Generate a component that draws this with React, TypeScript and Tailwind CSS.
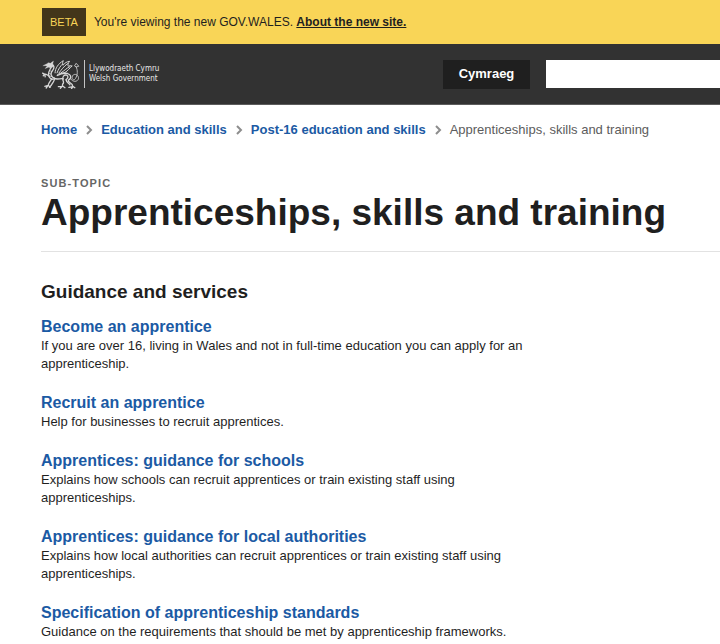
import React from "react";

const crumbs = ["Home", "Education and skills", "Post-16 education and skills"];

const services = [
  {
    title: "Become an apprentice",
    text: "If you are over 16, living in Wales and not in full-time education you can apply for an apprenticeship.",
  },
  {
    title: "Recruit an apprentice",
    text: "Help for businesses to recruit apprentices.",
  },
  {
    title: "Apprentices: guidance for schools",
    text: "Explains how schools can recruit apprentices or train existing staff using apprenticeships.",
  },
  {
    title: "Apprentices: guidance for local authorities",
    text: "Explains how local authorities can recruit apprentices or train existing staff using apprenticeships.",
  },
  {
    title: "Specification of apprenticeship standards",
    text: "Guidance on the requirements that should be met by apprenticeship frameworks.",
  },
];

function Dragon() {
  return (
    <svg
      viewBox="5 11 114 88"
      className="h-[29px] w-[38px]"
      fill="none"
      stroke="#d6d6d6"
      strokeWidth="4"
      strokeLinecap="round"
      strokeLinejoin="round"
      aria-hidden="true"
    >
      {/* head, jaw and ear */}
      <path d="M8 28 L18 23 L24 19 L30 21 L39 14 L37 23 L40 29 L33 35 L24 33 L14 37 L20 29 Z" fill="#d6d6d6" strokeWidth="1" />
      {/* neck and chest */}
      <path d="M38 27 C46 35 36 41 33 48 C29 57 34 64 42 66" />
      <path d="M31 35 C28 41 24 47 24 54 C24 63 30 68 38 70" />
      <path d="M29 44 L35 46 M26 52 L33 54 M29 61 L36 60" strokeWidth="2" />
      {/* raised wing */}
      <path d="M44 50 C44 36 54 22 69 13 C66 20 66 24 68 27 C73 20 80 16 88 15 C83 21 82 26 84 30 C88 28 92 28 96 29 C87 36 84 43 74 49 C64 52 56 50 50 57" strokeWidth="3" />
      <path d="M50 50 C54 39 60 29 67 23 M56 50 C63 41 70 31 82 22 M62 50 C72 44 78 36 89 31" strokeWidth="3" />
      {/* belly, back and haunch */}
      <path d="M40 66 C50 72 60 66 68 68 M51 58 C60 53 72 50 82 52 C92 55 94 63 88 70" />
      <path d="M68 68 C66 61 72 55 79 57 C86 60 83 67 77 71" />
      {/* fore legs and claws */}
      <path d="M27 60 C20 57 17 52 12 54 L6 51 M12 54 L8 59 M13 55 L14 62" />
      <path d="M34 68 C30 75 25 79 23 88 L13 91 M23 88 L17 96 M24 88 L29 94" />
      <path d="M42 69 C42 76 37 79 33 87 L27 94" />
      {/* hind legs and claws */}
      <path d="M68 68 C66 76 74 78 67 84 L66 91 L54 92 M66 91 L60 97 M67 90 L74 95" />
      <path d="M87 69 C79 77 92 80 96 86 L98 92 L86 94 M98 92 L94 98 M98 91 L104 95" />
      <path d="M78 71 C77 78 85 81 89 86" />
      {/* tail */}
      <path d="M91 68 C98 79 112 78 115 68 C117 56 102 50 97 59 C92 68 101 76 106 67 C113 56 113 42 108 32 M108 32 L103 29 L108 21 L116 30 L109 32" strokeWidth="2.5" />
    </svg>
  );
}

function Chevron() {
  return (
    <svg viewBox="0 0 8 10" className="mx-2 h-[10px] w-2" fill="none" stroke="#8d8d8d" strokeWidth="2" aria-hidden="true">
      <path d="M2 1 L6 5 L2 9" />
    </svg>
  );
}

export default function App() {
  return (
    <div className="min-h-screen overflow-x-hidden bg-white font-['Liberation_Sans',Arial,sans-serif] text-[13px] leading-[18px] text-[#1f1f1f]">
      <div className="flex h-11 items-center gap-2 bg-[#f9d557] pl-[42px]">
        <span className="bg-[#43361a] px-2 py-[6px] text-[11px] leading-4 text-[#f9d557]">BETA</span>
        <p className="text-xs leading-[18px]">
          You're viewing the new GOV.WALES.{" "}
          <a href="#about" className="font-bold underline">
            About the new site.
          </a>
        </p>
      </div>

      <header className="flex h-[61px] items-center border-b border-[#5c5c5c] bg-[#323232] pl-[42px]">
        <a href="#home" className="flex items-center text-[#e8e8e8]">
          <Dragon />
          <span className="ml-1 border-l border-[#c4c4c4] py-1 pl-1 font-['DejaVu_Sans_Condensed','DejaVu_Sans',sans-serif] text-[8px] leading-[10px]">
            Llywodraeth Cymru
            <br />
            Welsh Government
          </span>
        </a>
        <div className="ml-auto flex w-[277px] shrink-0 gap-4">
          <button type="button" className="h-[29px] w-[87px] shrink-0 bg-[#1f1f1f] font-bold text-white">
            Cymraeg
          </button>
          <input type="search" aria-label="Search" className="h-7 min-w-0 flex-1 rounded-none bg-white px-2 text-black" />
        </div>
      </header>

      <main className="pl-[41px]">
        <nav aria-label="Breadcrumb" className="pt-4">
          <ol className="flex items-center whitespace-nowrap">
            {crumbs.map((crumb) => (
              <li key={crumb} className="flex items-center">
                <a href="#topic" className="font-bold text-[#1b5aa4]">
                  {crumb}
                </a>
                <Chevron />
              </li>
            ))}
            <li className="text-[#5c5c5c]">Apprenticeships, skills and training</li>
          </ol>
        </nav>

        <div className="border-b border-[#e2e2e2] pt-9 pb-4">
          <p className="text-[11px] leading-4 font-bold tracking-widest text-[#666666]">SUB-TOPIC</p>
          <h1 className="text-[37px] leading-[44px] font-bold whitespace-nowrap">Apprenticeships, skills and training</h1>
        </div>

        <section className="pt-7">
          <h2 className="text-[19px] leading-6 font-bold">Guidance and services</h2>
          <ul className="flex max-w-[500px] flex-col gap-5 pt-[13px]">
            {services.map((service) => (
              <li key={service.title}>
                <h3 className="text-base leading-5 font-bold">
                  <a href="#service" className="text-[#1b5aa4]">
                    {service.title}
                  </a>
                </h3>
                <p>{service.text}</p>
              </li>
            ))}
          </ul>
        </section>
      </main>
    </div>
  );
}
